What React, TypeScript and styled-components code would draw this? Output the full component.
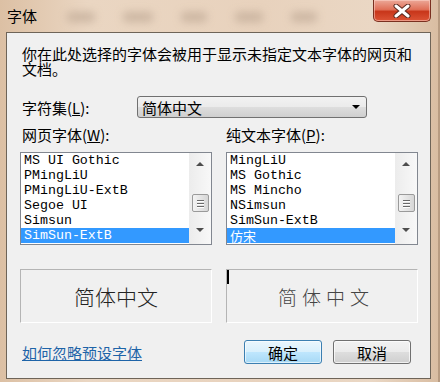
import React from 'react';
import styled, { createGlobalStyle } from 'styled-components';

const GlobalStyle = createGlobalStyle`
	html, body {
		margin: 0;
		padding: 0;
		background: #e6cfb8;
	}
	body {
		font-family: 'Noto Sans CJK SC', 'Noto Sans', sans-serif;
	}
`;

const Frame = styled.div`
	position: relative;
	width: 440px;
	height: 382px;
	box-sizing: border-box;
	overflow: hidden;
	background: linear-gradient(90deg, #dcc0a4 0%, #ead6c2 20%, #e8d2bd 60%, #ead7c4 85%, #d9bda2 100%);
	border-right: 2px solid #b89c82;
`;

const TitleBar = styled.div`
	position: relative;
	height: 32px;
	display: flex;
	align-items: flex-start;
	padding: 6px 0 0 7px;
	box-sizing: border-box;
`;

const Title = styled.span`
	font-size: 15px;
	line-height: 20px;
	color: #000;
	margin-right: 30px;
`;

const Smudge = styled.span<{ $w: number }>`
	display: inline-block;
	width: ${({ $w }) => $w}px;
	height: 10px;
	margin: 6px 28px 0 0;
	background: #bfa995;
	border-radius: 4px;
	filter: blur(4px);
	opacity: 0.7;
`;

const CloseButton = styled.button`
	position: absolute;
	top: 0;
	right: 7px;
	width: 58px;
	height: 22px;
	border: 1px solid #7a3020;
	border-top: none;
	border-radius: 0 0 5px 5px;
	background: linear-gradient(#eca898 0%, #e07058 45%, #c8361a 55%, #dc5436 100%);
	box-shadow: inset 0 0 0 1px rgba(255, 220, 210, 0.5);
	display: flex;
	align-items: center;
	justify-content: center;
	padding: 0;
`;

const Client = styled.div`
	height: 347px;
	margin: 0 7px 0 6px;
	border: 1px solid #6e6458;
	background: #f0f0f0;
	padding: 13px 14px 0 13px;
	box-sizing: border-box;
	color: #000;
	font-size: 15px;
`;

const Description = styled.p`
	margin: 0;
	padding-left: 2px;
	line-height: 15px;
`;

const CharsetRow = styled.div`
	display: flex;
	align-items: center;
	margin-top: 20px;
	height: 22px;
`;

const CharsetLabel = styled.span`
	width: 117px;
	padding-left: 2px;
	box-sizing: border-box;
	line-height: 15px;
`;

const Hotkey = styled.span`
	text-decoration: underline;
`;

const Select = styled.div`
	width: 230px;
	height: 22px;
	box-sizing: border-box;
	border: 1px solid #707070;
	border-radius: 3px;
	background: linear-gradient(#f2f2f2 0%, #ebebeb 48%, #dddddd 52%, #cfcfcf 100%);
	display: flex;
	align-items: center;
	justify-content: space-between;
	padding: 0 6px 0 4px;
	line-height: 15px;
`;

const Arrow = styled.span<{ $up?: boolean; $color?: string }>`
	width: 0;
	height: 0;
	border-left: 4px solid transparent;
	border-right: 4px solid transparent;
	${({ $up, $color }) =>
		$up ? `border-bottom: 4px solid ${$color || '#000'};` : `border-top: 4px solid ${$color || '#000'};`}
`;

const Columns = styled.div`
	display: grid;
	grid-template-columns: 192px 192px;
	column-gap: 14px;
	margin-top: 9px;
`;

const Column = styled.div`
	display: flex;
	flex-direction: column;
`;

const ColumnLabel = styled.span<{ $indent: number }>`
	padding-left: ${({ $indent }) => $indent}px;
	line-height: 15px;
	margin-bottom: 10px;
`;

const ListBox = styled.div`
	height: 93px;
	box-sizing: border-box;
	border: 1px solid #828790;
	background: #fff;
	display: flex;
`;

const Items = styled.div`
	flex: 1;
	display: flex;
	flex-direction: column;
`;

const Item = styled.div<{ $selected?: boolean }>`
	height: 15px;
	line-height: 15px;
	padding-left: 3px;
	font-family: 'Liberation Mono', 'Noto Sans CJK SC', monospace;
	font-size: 13.3px;
	white-space: nowrap;
	color: ${({ $selected }) => ($selected ? '#fff' : '#000')};
	background: ${({ $selected }) => ($selected ? '#3399ff' : 'transparent')};
`;

const CjkItem = styled.span`
	display: inline-block;
	vertical-align: top;
	height: 15px;
	line-height: 15px;
	font-family: 'Noto Sans CJK SC', sans-serif;
	font-size: 13px;
`;

const ScrollBar = styled.div`
	width: 22px;
	background: linear-gradient(90deg, #ececec, #f8f8f8);
	display: flex;
	flex-direction: column;
	align-items: center;
	padding-top: 9px;
	box-sizing: border-box;
`;

const Thumb = styled.div`
	width: 17px;
	height: 18px;
	margin-top: 28px;
	margin-bottom: 16px;
	box-sizing: border-box;
	border: 1px solid #9a9a9a;
	border-radius: 2px;
	background: linear-gradient(90deg, #f3f3f3, #e2e2e2 60%, #d6d6d6);
	display: flex;
	flex-direction: column;
	align-items: center;
	justify-content: center;
	gap: 2px;
`;

const Grip = styled.span`
	width: 7px;
	height: 1px;
	background: #6a6a6a;
	box-shadow: 0 1px 0 #fff;
`;

const Previews = styled.div`
	display: grid;
	grid-template-columns: 192px 192px;
	column-gap: 14px;
	margin-top: 24px;
`;

const Preview = styled.div<{ $spaced?: boolean }>`
	position: relative;
	height: 54px;
	box-sizing: border-box;
	border: 1px solid;
	border-color: #b4b4b4 #ffffff #ffffff #b4b4b4;
	display: flex;
	align-items: center;
	justify-content: center;
	padding-left: ${({ $spaced }) => ($spaced ? '8px' : '0')};
	font-size: ${({ $spaced }) => ($spaced ? '19px' : '21px')};
	letter-spacing: ${({ $spaced }) => ($spaced ? '5px' : '0')};
	color: ${({ $spaced }) => ($spaced ? '#444' : '#222')};
	font-weight: 300;
`;

const Caret = styled.span`
	position: absolute;
	left: 0;
	top: 0;
	width: 2px;
	height: 14px;
	background: #000;
`;

const Footer = styled.div`
	display: flex;
	align-items: center;
	margin-top: 17px;
	padding: 0 5px 0 2px;
	height: 24px;
`;

const HelpLink = styled.a`
	color: #1e64a8;
	text-decoration: underline;
	line-height: 15px;
	margin-right: auto;
	cursor: pointer;
`;

const Button = styled.button<{ $default?: boolean }>`
	width: 78px;
	height: 24px;
	margin-left: 11px;
	box-sizing: border-box;
	border: 1px solid ${({ $default }) => ($default ? '#3c7fb1' : '#707070')};
	border-radius: 3px;
	background: ${({ $default }) =>
		$default
			? 'linear-gradient(#eaf6fd 0%, #d9f0fc 48%, #bee6fd 52%, #a7d9f5 100%)'
			: 'linear-gradient(#f2f2f2 0%, #ebebeb 48%, #dddddd 52%, #cfcfcf 100%)'};
	box-shadow: inset 0 0 0 1px ${({ $default }) => ($default ? 'rgba(255,255,255,0.6)' : 'rgba(255,255,255,0.7)')};
	font-family: 'Noto Sans CJK SC', sans-serif;
	font-size: 15px;
	line-height: 15px;
	color: #000;
	padding: 0;
`;

const webFonts = ['MS UI Gothic', 'PMingLiU', 'PMingLiU-ExtB', 'Segoe UI', 'Simsun', 'SimSun-ExtB'];
const textFonts = ['MingLiU', 'MS Gothic', 'MS Mincho', 'NSimsun', 'SimSun-ExtB', '仿宋'];

const FontList = ({ fonts, selected }: { fonts: string[]; selected: number }) => (
	<ListBox>
		<Items>
			{fonts.map((f, i) => (
				<Item key={f} $selected={i === selected}>
					{/[\u4e00-\u9fff]/.test(f) ? <CjkItem>{f}</CjkItem> : f}
				</Item>
			))}
		</Items>
		<ScrollBar>
			<Arrow $up $color='#4d4d4d' />
			<Thumb>
				<Grip />
				<Grip />
				<Grip />
			</Thumb>
			<Arrow $color='#4d4d4d' />
		</ScrollBar>
	</ListBox>
);

export default function App() {
	return (
		<>
			<GlobalStyle />
			<Frame>
				<TitleBar>
					<Title>字体</Title>
					<Smudge $w={28} />
					<Smudge $w={30} />
					<Smudge $w={26} />
					<Smudge $w={28} />
					<Smudge $w={26} />
					<CloseButton aria-label='关闭'>
						<svg width='18' height='14' viewBox='0 0 18 14'>
							<path
								d='M3 2 L15 12 M15 2 L3 12'
								stroke='#5a2a20'
								strokeWidth='5'
								strokeLinecap='round'
							/>
							<path
								d='M3 2 L15 12 M15 2 L3 12'
								stroke='#fff'
								strokeWidth='3'
								strokeLinecap='round'
							/>
						</svg>
					</CloseButton>
				</TitleBar>
				<Client>
					<Description>你在此处选择的字体会被用于显示未指定文本字体的网页和文档。</Description>
					<CharsetRow>
						<CharsetLabel>
							字符集(<Hotkey>L</Hotkey>):
						</CharsetLabel>
						<Select>
							<span>简体中文</span>
							<Arrow />
						</Select>
					</CharsetRow>
					<Columns>
						<Column>
							<ColumnLabel $indent={2}>
								网页字体(<Hotkey>W</Hotkey>):
							</ColumnLabel>
							<FontList fonts={webFonts} selected={5} />
						</Column>
						<Column>
							<ColumnLabel $indent={0}>
								纯文本字体(<Hotkey>P</Hotkey>):
							</ColumnLabel>
							<FontList fonts={textFonts} selected={5} />
						</Column>
					</Columns>
					<Previews>
						<Preview>简体中文</Preview>
						<Preview $spaced>
							<Caret />
							简体中文
						</Preview>
					</Previews>
					<Footer>
						<HelpLink>如何忽略预设字体</HelpLink>
						<Button $default>确定</Button>
						<Button>取消</Button>
					</Footer>
				</Client>
			</Frame>
		</>
	);
}
